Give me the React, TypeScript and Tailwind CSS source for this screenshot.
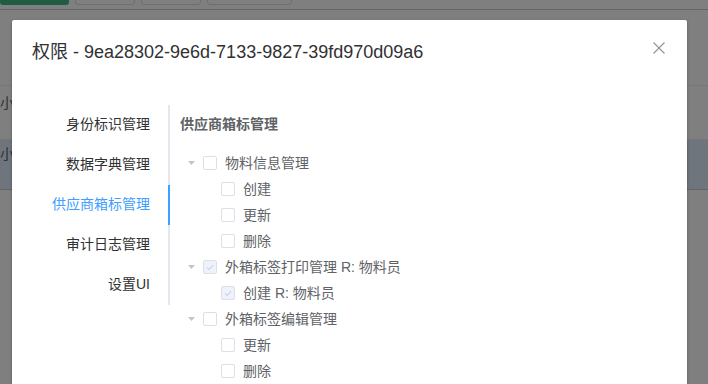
import React from 'react';

type Node = {
  label: string;
  checked?: boolean;
  disabled?: boolean;
  children?: Node[];
};

const tabs = ['身份标识管理', '数据字典管理', '供应商箱标管理', '审计日志管理', '设置UI'];

const tree: Node[] = [
  {
    label: '物料信息管理',
    children: [{ label: '创建' }, { label: '更新' }, { label: '删除' }],
  },
  {
    label: '外箱标签打印管理 R: 物料员',
    checked: true,
    disabled: true,
    children: [{ label: '创建 R: 物料员', checked: true, disabled: true }],
  },
  {
    label: '外箱标签编辑管理',
    children: [{ label: '更新' }, { label: '删除' }],
  },
];

function Checkbox({ checked, disabled }: { checked?: boolean; disabled?: boolean }) {
  return (
    <span
      className={`mr-2 flex h-[14px] w-[14px] shrink-0 items-center justify-center rounded-[2px] border border-[#DCDFE6] ${
        disabled ? 'bg-[#EDF2FC]' : 'bg-white'
      }`}
    >
      {checked && (
        <svg width="8" height="7" viewBox="0 0 8 7" fill="none">
          <path d="M1 3.5 L3.2 5.6 L7 1.2" stroke="#C0C4CC" strokeWidth="1" />
        </svg>
      )}
    </span>
  );
}

function TreeRow({ node, level }: { node: Node; level: number }) {
  const hasChildren = !!node.children?.length;
  return (
    <>
      <div className="flex h-[26px] items-center" style={{ paddingLeft: level * 18 }}>
        <span className="flex h-6 w-6 shrink-0 items-center justify-center">
          {hasChildren && (
            <svg width="7" height="4" viewBox="0 0 7 4">
              <path d="M0 0 H7 L3.5 4 Z" fill="#C0C4CC" />
            </svg>
          )}
        </span>
        <Checkbox checked={node.checked} disabled={node.disabled} />
        <span className="text-sm text-[#606266]">{node.label}</span>
      </div>
      {node.children?.map((c, i) => (
        <TreeRow key={i} node={c} level={level + 1} />
      ))}
    </>
  );
}

export default function App() {
  return (
    <div
      className="relative h-[384px] w-[708px] overflow-hidden bg-white"
      style={{ fontFamily: '"Liberation Sans", "Noto Sans CJK SC", sans-serif' }}
    >
      {/* page behind the modal */}
      <div className="flex h-[10px] items-start gap-[6px] overflow-hidden border-b border-[#c9c9c9]">
        <div className="-mt-[25px] h-[30px] w-[69px] shrink-0 rounded-[3px] bg-[#3eb880]" />
        <div className="-mt-[25px] h-[30px] w-[60px] shrink-0 rounded-[3px] border border-[#DCDFE6] bg-white" />
        <div className="-mt-[25px] h-[30px] w-[60px] shrink-0 rounded-[3px] border border-[#DCDFE6] bg-white" />
        <div className="-mt-[25px] h-[30px] w-[85px] shrink-0 rounded-[3px] border border-[#DCDFE6] bg-white" />
      </div>
      <div className="h-[76px] border-b border-[#EBEEF5]" />
      <div className="flex h-[54px] items-start border-b border-[#EBEEF5] pt-[7px] text-sm text-[#606266]">
        <span>小组</span>
      </div>
      <div className="flex h-[50px] items-start border-b border-[#c9c9c9] bg-[#deeafa] pt-[4px] text-sm text-[#606266]">
        <span>小组</span>
      </div>

      {/* overlay */}
      <div className="absolute inset-0 bg-black/50" />

      {/* dialog */}
      <div className="absolute left-[12px] top-[20px] h-[400px] w-[675px] rounded-[2px] bg-white shadow-[0_1px_3px_rgba(0,0,0,0.3)]">
        <div className="relative px-5 pb-[10px] pt-5">
          <span className="text-[18px] leading-6 text-[#303133]">权限 - 9ea28302-9e6d-7133-9827-39fd970d09a6</span>
          <button className="absolute right-5 top-5 flex h-4 w-4 items-center justify-center">
            <svg width="12" height="12" viewBox="0 0 12 12">
              <path d="M0.5 0.5 L11.5 11.5 M11.5 0.5 L0.5 11.5" stroke="#909399" strokeWidth="1.1" />
            </svg>
          </button>
        </div>

        <div className="flex px-5 py-[30px]">
          <div className="flex w-[138px] shrink-0 flex-col self-start">
            {tabs.map((t, i) => (
              <div
                key={t}
                className={`h-10 border-r-2 pr-[18px] text-right text-sm leading-[39px] ${
                  i === 2 ? 'border-[#409EFF] text-[#409EFF]' : 'border-[#E4E7ED] text-[#303133]'
                }`}
              >
                {t}
              </div>
            ))}
          </div>

          <div className="ml-[10px] flex-1">
            <div className="h-[45px] text-sm font-bold leading-[39px] text-[#606266]">供应商箱标管理</div>
            <div className="-ml-[1px]">
              {tree.map((n, i) => (
                <TreeRow key={i} node={n} level={0} />
              ))}
            </div>
          </div>
        </div>
      </div>
    </div>
  );
}
